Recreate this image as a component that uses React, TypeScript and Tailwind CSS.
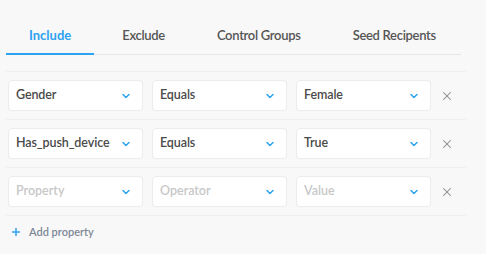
import { ChevronDown, X, Plus } from 'lucide-react';

const tabs = ['Include', 'Exclude', 'Control Groups', 'Seed Recipents'];

const rows = [
  ['Gender', 'Equals', 'Female'],
  ['Has_push_device', 'Equals', 'True'],
  [null, null, null],
];
const placeholders = ['Property', 'Operator', 'Value'];

// 下拉选择框
const Select = ({ value, placeholder }: { value: string | null; placeholder: string }) => (
  <div className="flex h-[31px] w-[135px] items-center justify-between rounded-[4px] border border-[#ececec] bg-white pl-[7px] pr-[10px]">
    <span className={value ? 'text-[12.5px] font-semibold tracking-[-0.1px] text-[#4a4a4a]' : 'text-[12.5px] font-semibold text-[#c8c8c8]'}>
      {value ?? placeholder}
    </span>
    <ChevronDown size={12} strokeWidth={3} className="text-[#2ea3f2]" />
  </div>
);

export default function App() {
  return (
    <div className="h-[254px] w-[486px] bg-[#f8f8f8] pl-[6px] pt-[20px]" style={{ fontFamily: 'Lato, "Open Sans", sans-serif' }}>
      <div className="flex h-[35px] w-[455px] gap-[4px] border-b border-[#e6e6e6]">
        {tabs.map((t, i) => (
          <div
            key={t}
            className={
              i === 0
                ? '-mb-px flex shrink-0 items-start justify-center whitespace-nowrap border-b-2 border-[#2ea3f2] px-[23px] pt-[6px] text-[13px] font-bold text-[#2ea3f2]'
                : 'flex shrink-0 items-start justify-center whitespace-nowrap px-[24px] pt-[6px] text-[13px] font-semibold tracking-[-0.3px] text-[#555]'
            }
          >
            {t}
          </div>
        ))}
      </div>
      <div className="mt-[16px] w-[460px] border-t border-[#efefef]">
        {rows.map((r, i) => (
          <div key={i} className="flex items-center gap-[9px] border-b border-[#efefef] py-[8px] pl-[2px]">
            {r.map((v, j) => (
              <Select key={j} value={v} placeholder={placeholders[j]} />
            ))}
            <X size={14} strokeWidth={1.75} className="text-[#8a8a8a]" />
          </div>
        ))}
        <div className="mt-[8px] flex items-center gap-[7px] pl-[4px] text-[11px] font-semibold text-[#7d8796]">
          <Plus size={12} strokeWidth={3} className="text-[#2ea3f2]" />
          Add property
        </div>
      </div>
    </div>
  );
}
